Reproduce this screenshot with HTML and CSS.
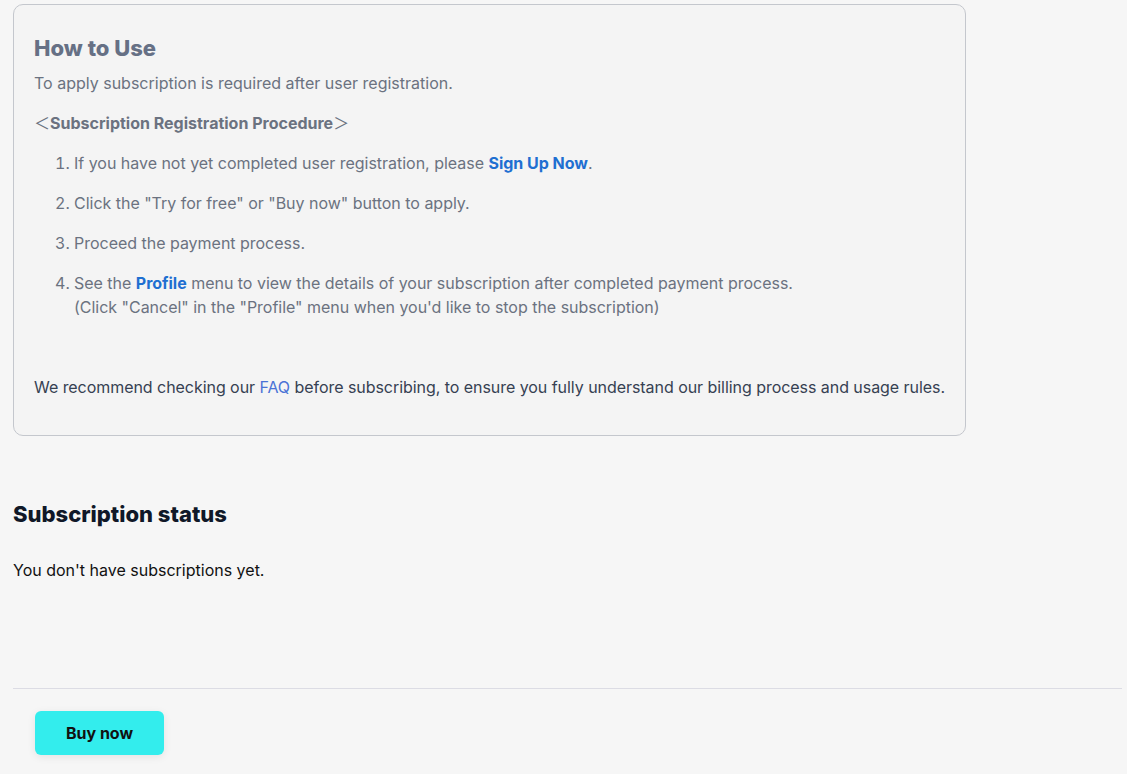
FILE: index.html
```html
<!DOCTYPE html>
<html lang="en">
<head>
<meta charset="utf-8">
<title>Subscription</title>
<link rel="stylesheet" href="styles.css">
</head>
<body>
<main class="page">
  <section class="howto">
    <h2 class="howto-title">How to Use</h2>
    <p class="howto-intro">To apply subscription is required after user registration.</p>
    <p class="procedure"><span class="bracket">＜</span>Subscription Registration Procedure<span class="bracket">＞</span></p>
    <ol class="steps">
      <li>If you have not yet completed user registration, please <a class="strong-link" href="#">Sign Up Now</a>.</li>
      <li>Click the "Try for free" or "Buy now" button to apply.</li>
      <li>Proceed the payment process.</li>
      <li>See the <a class="strong-link" href="#">Profile</a> menu to view the details of your subscription after completed payment process.<br>(Click "Cancel" in the "Profile" menu when you'd like to stop the subscription)</li>
    </ol>
    <p class="recommend">We recommend checking our <a class="faq-link" href="#">FAQ</a> before subscribing, to ensure you fully understand our billing process and usage rules.</p>
  </section>

  <section class="status">
    <h2 class="status-title">Subscription status</h2>
    <p class="status-text">You don't have subscriptions yet.</p>
  </section>

  <footer class="actions">
    <button class="buy-btn" type="button">Buy now</button>
  </footer>
</main>
</body>
</html>
```

FILE: styles.css
```css
* { box-sizing: border-box; }

html, body {
  margin: 0;
  padding: 0;
  background: #f6f6f6;
}

body {
  font-family: Inter, "Noto Sans", sans-serif;
  font-size: 16px;
  line-height: 24px;
  color: #111827;
}

.page {
  padding: 4px 5px 0 13px;
}

.howto {
  width: 953px;
  background: #f4f4f4;
  border: 1px solid #c4c7cd;
  border-radius: 10px;
  padding: 29px 12px 36px 20px;
}

.howto-title {
  margin: 0;
  font-size: 22px;
  line-height: 28px;
  font-weight: 800;
  color: #667085;
}

.howto-intro {
  margin: 9px 0 0;
  color: #6b7280;
}

.procedure {
  margin: 16px 0 0;
  height: 24px;
  font-weight: 700;
  color: #6b7280;
}

.bracket {
  font-family: "Noto Sans CJK JP", sans-serif;
  font-weight: 400;
  line-height: 0;
}

.steps {
  margin: 16px 0 0;
  padding-left: 40px;
  color: #6b7280;
  letter-spacing: -0.02px;
}

.steps li {
  margin-bottom: 16px;
}

.steps li:last-child {
  margin-bottom: 0;
}

.strong-link {
  color: #1f6fd1;
  font-weight: 700;
  text-decoration: none;
}

.recommend {
  margin: 56px 0 0;
  color: #364152;
  letter-spacing: -0.05px;
  white-space: nowrap;
}

.faq-link {
  color: #4a72d6;
  text-decoration: none;
}

.status {
  padding-top: 64px;
}

.status-title {
  margin: 0;
  font-size: 22px;
  line-height: 28px;
  font-weight: 800;
  color: #101828;
}

.status-text {
  margin: 30px 0 0;
  color: #111111;
}

.actions {
  margin-top: 106px;
  border-top: 1px solid #dcdce4;
  padding: 22px 0 20px 22px;
}

.buy-btn {
  font-family: Inter, "Noto Sans", sans-serif;
  font-size: 16px;
  font-weight: 700;
  color: #111;
  background: #33eded;
  border: none;
  border-radius: 6px;
  width: 129px;
  height: 44px;
  box-shadow: 0 2px 8px rgba(0, 0, 0, 0.08);
  cursor: pointer;
}
```
